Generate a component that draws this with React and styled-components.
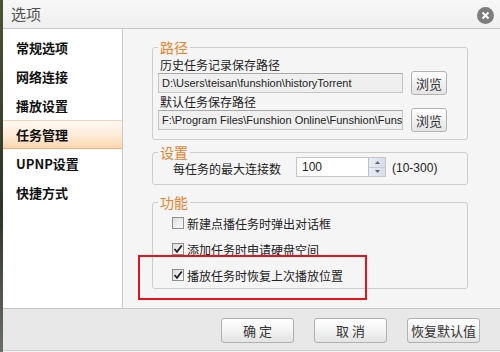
import React from "react";
import styled, { createGlobalStyle } from "styled-components";

const GlobalStyle = createGlobalStyle`
  html, body { margin: 0; padding: 0; }
  body {
    width: 500px; height: 352px; overflow: hidden;
    background: #3a4234;
    font-family: "Noto Sans CJK SC", "Liberation Sans", sans-serif;
  }
`;

const Page = styled.div`
  display: flex;
  width: 500px;
  height: 352px;
  background: linear-gradient(#4a5432, #2e3328 60%, #6a6e68);
`;

const Window = styled.div`
  margin-left: 3px;
  flex: 1;
  display: flex;
  flex-direction: column;
  background: #f4f4f4;
`;

const TitleBar = styled.div`
  height: 28px;
  border-bottom: 1px solid #c9c9c9;
  background: linear-gradient(#f7f7f7, #efefef);
  display: flex;
  align-items: center;
  justify-content: space-between;
  padding: 0 6px 0 8px;
`;

const Title = styled.div`
  font-size: 15px;
  color: #505050;
  line-height: 28px;
`;

const CloseBtn = styled.div`
  width: 17px;
  height: 17px;
  border-radius: 50%;
  background: #7d7d7d;
  display: flex;
  align-items: center;
  justify-content: center;
  margin-top: 2px;
`;

const Body = styled.div`
  display: flex;
  height: 279px;
`;

const Sidebar = styled.div`
  width: 119px;
  background: #ffffff;
  border-right: 1px solid #cacaca;
  padding-top: 4px;
  display: flex;
  flex-direction: column;
`;

const NavItem = styled.div`
  height: 29px;
  box-sizing: border-box;
  display: flex;
  align-items: center;
  padding-left: 13px;
  font-size: 13px;
  font-weight: 700;
  color: #111;
  border-top: 1px solid ${(p) => (p.$active ? "#f7d3b0" : "transparent")};
  border-bottom: 1px solid ${(p) => (p.$active ? "#f2b17a" : "transparent")};
  background: ${(p) =>
    p.$active ? "linear-gradient(#fffaf4, #fde8d2 60%, #fbd6ae)" : "transparent"};
`;

const Content = styled.div`
  position: relative;
  flex: 1;
  padding: 0 32px 0 29px;
  display: flex;
  flex-direction: column;
  background: #f5f5f5;
`;

const Group = styled.div`
  position: relative;
  border: 1px solid #cdcdcd;
  border-radius: 3px;
  margin-top: ${(p) => p.$mt}px;
  padding: ${(p) => p.$pad};
  display: flex;
  flex-direction: column;
`;

const Legend = styled.div`
  position: absolute;
  top: -9px;
  left: 5px;
  padding: 0 2px;
  background: #f5f5f5;
  color: #e8832e;
  font-size: 14px;
  line-height: 16px;
`;

const Label = styled.div`
  font-size: 12px;
  line-height: 12px;
  height: 12px;
  color: #222;
  margin-left: 2px;
  margin-top: ${(p) => p.$mt || 0}px;
  white-space: nowrap;
`;

const PathRow = styled.div`
  display: flex;
  align-items: center;
  height: 24px;
`;

const PathInput = styled.div`
  width: 245px;
  height: 20px;
  box-sizing: border-box;
  border: 1px solid #c4c4c4;
  border-top-color: #a9a9a9;
  background: #efefef;
  font-family: "Liberation Sans", sans-serif;
  font-size: 11px;
  line-height: 18px;
  padding-left: 3px;
  color: #222;
  overflow: hidden;
  white-space: nowrap;
`;

const SmallButton = styled.div`
  width: 36px;
  height: 24px;
  box-sizing: border-box;
  margin-left: 8px;
  border: 1px solid #b3b3b3;
  border-radius: 3px;
  background: linear-gradient(#ffffff, #f1f1f1 50%, #e4e4e4);
  display: flex;
  align-items: center;
  justify-content: center;
  font-size: 13px;
  color: #333;
`;

const SettingRow = styled.div`
  display: flex;
  align-items: center;
  height: 22px;
  font-size: 12px;
  color: #222;
`;

const SpinBox = styled.div`
  display: flex;
  width: 90px;
  height: 20px;
  box-sizing: border-box;
  margin-left: 15px;
  border: 1px solid #c6c6c6;
  background: #ffffff;
  margin-top: -2px;
`;

const SpinValue = styled.div`
  flex: 1;
  font-family: "Liberation Sans", sans-serif;
  font-size: 12px;
  line-height: 18px;
  padding-left: 5px;
  color: #222;
`;

const SpinArrows = styled.div`
  width: 16px;
  display: flex;
  flex-direction: column;
  border-left: 1px solid #b9c3cf;
  background: linear-gradient(90deg, #e9eef4, #d5dde7);
`;

const SpinHalf = styled.div`
  flex: 1;
  display: flex;
  align-items: center;
  justify-content: center;
  border-bottom: ${(p) => (p.$top ? "1px solid #c3ccd7" : "none")};
`;

const Range = styled.div`
  margin-left: 6px;
  font-family: "Liberation Sans", sans-serif;
  font-size: 12px;
  color: #222;
`;

const CheckRow = styled.div`
  display: flex;
  align-items: center;
  height: 26px;
  font-size: 12px;
  color: #222;
`;

const CheckBox = styled.div`
  width: 12px;
  height: 12px;
  box-sizing: border-box;
  border: 1px solid #8e8e8e;
  background: linear-gradient(135deg, #dcdcdc, #ffffff);
  margin-right: 3px;
  display: flex;
  align-items: center;
  justify-content: center;
`;

const Highlight = styled.div`
  position: absolute;
  left: 15px;
  top: 226px;
  width: 229px;
  height: 45px;
  box-sizing: border-box;
  border: 2px solid #e3141c;
  pointer-events: none;
`;

const Footer = styled.div`
  height: 43px;
  box-sizing: border-box;
  border-top: 1px solid #c7c7c7;
  border-bottom: 1px solid #d2d2d2;
  background: #e8e8e8;
  display: flex;
  justify-content: flex-end;
  align-items: flex-start;
  gap: 20px;
  padding: 9px 20px 0 0;
`;

const FooterButton = styled.div`
  width: 73px;
  height: 25px;
  box-sizing: border-box;
  border: 1px solid #b1b1b1;
  border-radius: 3px;
  background: linear-gradient(#ffffff, #f3f3f3 50%, #e3e3e3);
  display: flex;
  align-items: center;
  justify-content: center;
  font-size: 13px;
  color: #333;
  white-space: pre;
`;

const Check = ({ checked }) => (
  <CheckBox>
    {checked && (
      <svg width="10" height="10" viewBox="0 0 10 10">
        <path d="M1.5 5 L4 7.8 L8.8 1.5" fill="none" stroke="#222" strokeWidth="1.8" />
      </svg>
    )}
  </CheckBox>
);

const navItems = ["常规选项", "网络连接", "播放设置", "任务管理", "UPNP设置", "快捷方式"];

export default function App() {
  return (
    <>
      <GlobalStyle />
      <Page>
        <Window>
          <TitleBar>
            <Title>选项</Title>
            <CloseBtn>
              <svg width="9" height="9" viewBox="0 0 9 9">
                <path d="M1.5 1.5 L7.5 7.5 M7.5 1.5 L1.5 7.5" stroke="#fff" strokeWidth="2" />
              </svg>
            </CloseBtn>
          </TitleBar>
          <Body>
            <Sidebar>
              {navItems.map((n) => (
                <NavItem key={n} $active={n === "任务管理"}>
                  {n}
                </NavItem>
              ))}
            </Sidebar>
            <Content>
              <Group $mt={18} $pad="11px 0 7px 5px">
                <Legend>路径</Legend>
                <Label>历史任务记录保存路径</Label>
                <PathRow>
                  <PathInput>D:\Users\teisan\funshion\historyTorrent</PathInput>
                  <SmallButton>浏览</SmallButton>
                </PathRow>
                <Label $mt={1}>默认任务保存路径</Label>
                <PathRow>
                  <PathInput>F:\Program Files\Funshion Online\Funshion\Funshio</PathInput>
                  <SmallButton>浏览</SmallButton>
                </PathRow>
              </Group>
              <Group $mt={12} $pad="4px 0 5px 20px">
                <Legend>设置</Legend>
                <SettingRow>
                  每任务的最大连接数
                  <SpinBox>
                    <SpinValue>100</SpinValue>
                    <SpinArrows>
                      <SpinHalf $top>
                        <svg width="5" height="3" viewBox="0 0 5 3">
                          <path d="M0 3 L2.5 0 L5 3 Z" fill="#5a6a7e" />
                        </svg>
                      </SpinHalf>
                      <SpinHalf>
                        <svg width="5" height="3" viewBox="0 0 5 3">
                          <path d="M0 0 L2.5 3 L5 0 Z" fill="#5a6a7e" />
                        </svg>
                      </SpinHalf>
                    </SpinArrows>
                  </SpinBox>
                  <Range>(10-300)</Range>
                </SettingRow>
              </Group>
              <Group $mt={17} $pad="7px 0 0 19px">
                <Legend>功能</Legend>
                <CheckRow>
                  <Check checked={false} />
                  新建点播任务时弹出对话框
                </CheckRow>
                <CheckRow>
                  <Check checked />
                  添加任务时申请硬盘空间
                </CheckRow>
                <CheckRow>
                  <Check checked />
                  播放任务时恢复上次播放位置
                </CheckRow>
              </Group>
              <Highlight />
            </Content>
          </Body>
          <Footer>
            <FooterButton>确 定</FooterButton>
            <FooterButton>取 消</FooterButton>
            <FooterButton>恢复默认值</FooterButton>
          </Footer>
        </Window>
      </Page>
    </>
  );
}
